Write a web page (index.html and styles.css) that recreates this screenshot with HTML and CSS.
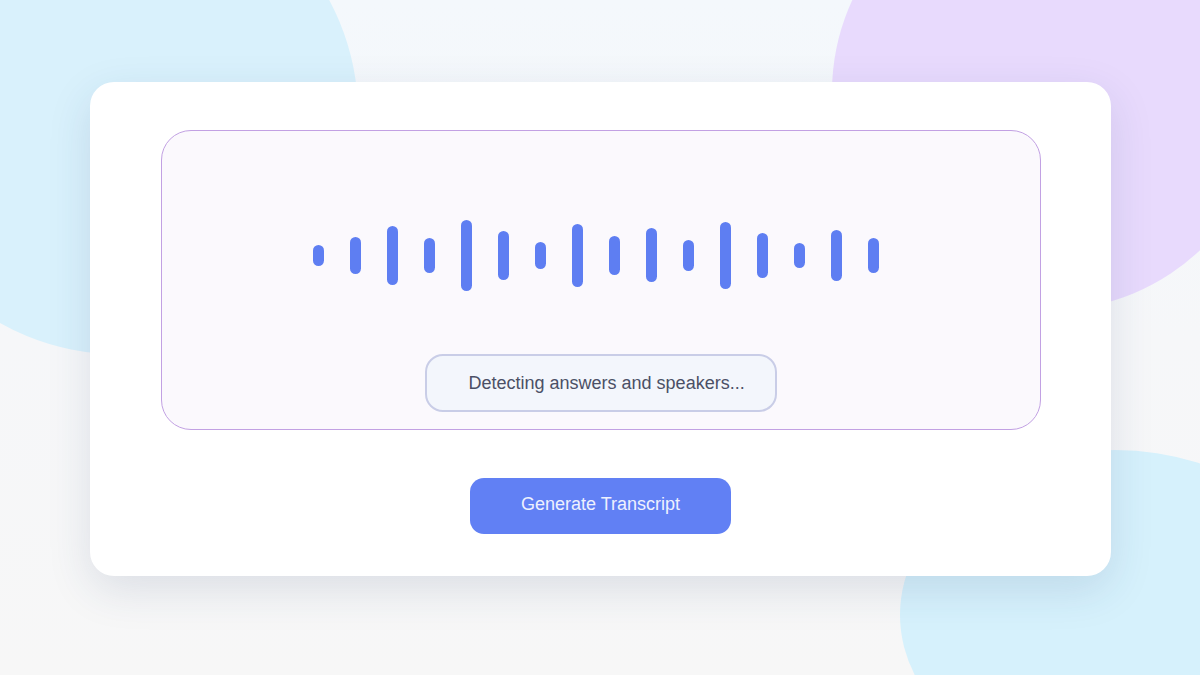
FILE: index.html
```html
<!DOCTYPE html>
<html lang="en">
<head>
<meta charset="utf-8">
<title>Transcript</title>
<link rel="stylesheet" href="styles.css">
</head>
<body>
<div class="backdrop">
  <div class="blob blob-tl"></div>
  <div class="blob blob-tr"></div>
  <div class="blob blob-br"></div>
</div>
<main class="card">
  <section class="stage">
    <div class="wave">
      <span class="bar" style="height:21px"></span>
      <span class="bar" style="height:37px"></span>
      <span class="bar" style="height:59px"></span>
      <span class="bar" style="height:35px"></span>
      <span class="bar" style="height:71px"></span>
      <span class="bar" style="height:49px"></span>
      <span class="bar" style="height:27px"></span>
      <span class="bar" style="height:63px"></span>
      <span class="bar" style="height:39px"></span>
      <span class="bar" style="height:54px"></span>
      <span class="bar" style="height:31px"></span>
      <span class="bar" style="height:67px"></span>
      <span class="bar" style="height:45px"></span>
      <span class="bar" style="height:25px"></span>
      <span class="bar" style="height:51px"></span>
      <span class="bar" style="height:35px"></span>
    </div>
    <div class="status">Detecting answers and speakers...</div>
  </section>
  <button class="cta" type="button">Generate Transcript</button>
</main>
</body>
</html>
```
FILE: styles.css
```css
* { box-sizing: border-box; }
html, body { margin: 0; padding: 0; }
body {
  width: 1200px;
  height: 675px;
  overflow: hidden;
  position: relative;
  font-family: "Liberation Sans", Arial, sans-serif;
  background: linear-gradient(180deg, #f4f8fc 0%, #f6f7f9 50%, #f7f7f7 100%);
}
.backdrop {
  position: absolute;
  inset: 0;
  overflow: hidden;
  z-index: 0;
}
.blob {
  position: absolute;
  border-radius: 50%;
}
.blob-tl {
  left: -122px;
  top: -126px;
  width: 480px;
  height: 480px;
  background: #d9f1fc;
}
.blob-tr {
  left: 832px;
  top: -126px;
  width: 436px;
  height: 436px;
  background: #e8dafd;
}
.blob-br {
  left: 900px;
  top: 450px;
  width: 430px;
  height: 330px;
  background: #d6f1fc;
}
.card {
  position: relative;
  z-index: 1;
  width: 1021px;
  margin: 82px 0 0 90px;
  padding: 48px 70px 42px;
  background: #ffffff;
  border-radius: 24px;
  box-shadow: 0 14px 44px rgba(40, 60, 110, 0.13);
  display: flex;
  flex-direction: column;
  align-items: center;
}
.stage {
  width: 880px;
  height: 300px;
  border: 1.5px solid #c2a1e3;
  border-radius: 30px;
  background: #fbf9fd;
  display: flex;
  flex-direction: column;
  align-items: center;
  padding-top: 84px;
}
.wave {
  height: 80px;
  display: flex;
  align-items: center;
  gap: 26px;
  padding-right: 10px;
}
.bar {
  display: block;
  width: 11px;
  border-radius: 6px;
  background: #5e7ef2;
}
.status {
  margin-top: 59px;
  height: 58px;
  width: 352px;
  border: 2px solid #c9cde7;
  border-radius: 18px;
  background: #f3f6fc;
  color: #4b5066;
  font-size: 18px;
  display: flex;
  align-items: center;
  padding: 0 28px 0 42px;
  white-space: nowrap;
}
.cta {
  margin-top: 48px;
  width: 261px;
  height: 56px;
  border: none;
  border-radius: 14px;
  background: #6180f4;
  color: #eef1fe;
  font-family: "Liberation Sans", Arial, sans-serif;
  font-size: 18px;
  padding: 0 0 3px;
  cursor: pointer;
}
```
